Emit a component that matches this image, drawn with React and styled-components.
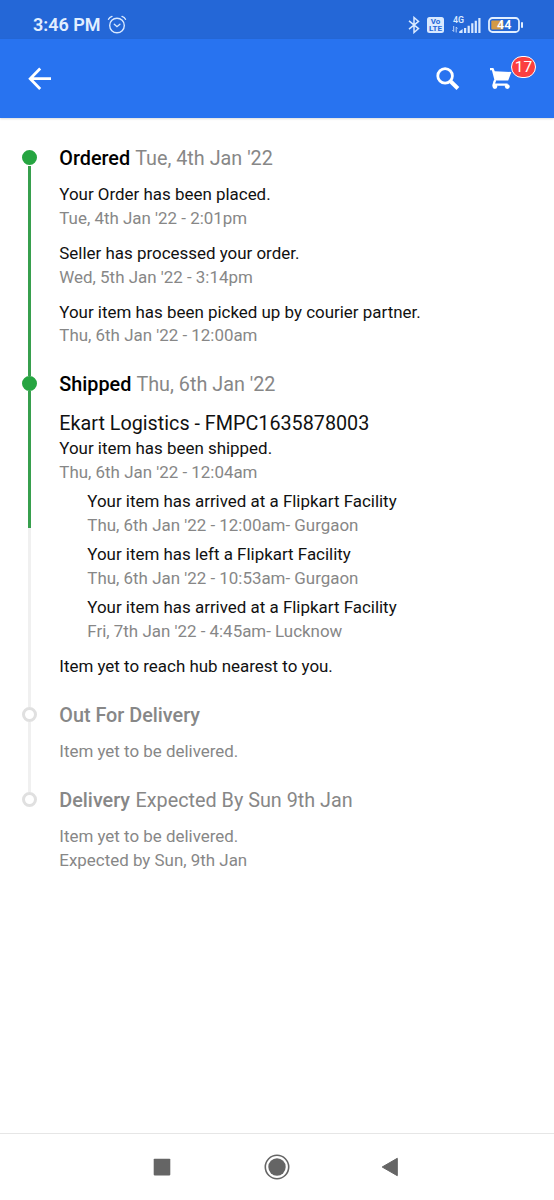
import React from "react";
import styled, { createGlobalStyle } from "styled-components";

const steps = [
  {
    title: "Ordered",
    date: "Tue, 4th Jan '22",
    done: true,
    progress: 100,
    events: [
      { text: "Your Order has been placed.", time: "Tue, 4th Jan '22 - 2:01pm" },
      { text: "Seller has processed your order.", time: "Wed, 5th Jan '22 - 3:14pm" },
      { text: "Your item has been picked up by courier partner.", time: "Thu, 6th Jan '22 - 12:00am" },
    ],
  },
  {
    title: "Shipped",
    date: "Thu, 6th Jan '22",
    done: true,
    progress: 43.2,
    courier: "Ekart Logistics - FMPC1635878003",
    events: [
      {
        text: "Your item has been shipped.",
        time: "Thu, 6th Jan '22 - 12:04am",
        stops: [
          { text: "Your item has arrived at a Flipkart Facility", time: "Thu, 6th Jan '22 - 12:00am- Gurgaon" },
          { text: "Your item has left a Flipkart Facility", time: "Thu, 6th Jan '22 - 10:53am- Gurgaon" },
          { text: "Your item has arrived at a Flipkart Facility", time: "Fri, 7th Jan '22 - 4:45am- Lucknow" },
        ],
      },
      { text: "Item yet to reach hub nearest to you." },
    ],
  },
  {
    title: "Out For Delivery",
    progress: 0,
    events: [{ time: "Item yet to be delivered." }],
  },
  {
    title: "Delivery",
    date: "Expected By Sun 9th Jan",
    last: true,
    events: [{ time: "Item yet to be delivered.", extra: "Expected by Sun, 9th Jan" }],
  },
];

const StatusIcons = () => (
  <Icons>
    <svg width="12" height="18" viewBox="0 0 12 18" fill="none" stroke="#d9e9ff" strokeWidth="1.5">
      <path d="M1 4.8 10.5 12.6 6 16.5V1.5L10.5 5.4 1 13.2" />
    </svg>
    <Volte>
      <span>Vo</span>
      <span>LTE</span>
    </Volte>
    <svg width="29" height="18" viewBox="0 0 29 18" fill="#d9e9ff">
      <NetworkText x="1" y="7">4G</NetworkText>
      <path d="M1.7 10v5.5L.4 14M4.2 16.5V11l1.3 1.5" fill="none" stroke="#b9d2fb" strokeWidth="1" />
      <path d="M7.2 17v-1.6l3.4-2.4v4zM12 12h2.2v5H12zM15.6 9.7h2.2V17h-2.2zM19.2 7.2h2.2V17h-2.2zM22.7 4.7h2.2V17h-2.2zM26.3 2h2.2v15h-2.2z" />
    </svg>
    <svg width="36" height="16" viewBox="0 0 36 16">
      <rect x="1" y="1" width="30" height="14" rx="3.5" fill="none" stroke="#e2efff" strokeWidth="1.8" />
      <rect x="3.3" y="3.4" width="12" height="9.2" rx="1" fill="#d39a45" />
      <path d="M34 6v4" stroke="#e2efff" strokeWidth="2" strokeLinecap="round" />
      <BatteryText x="16.2" y="12.3" textAnchor="middle">44</BatteryText>
    </svg>
  </Icons>
);

const AlarmIcon = () => (
  <svg width="20" height="20" viewBox="0 0 20 20" fill="none" stroke="#d9e9ff" strokeWidth="1.4" strokeLinecap="round">
    <circle cx="10" cy="10.5" r="7.3" />
    <path d="M7.3 9.3 10 11.7l2.9-2.4M1.5 4.3Q2.5 2.2 5 1.4M18.5 4.3Q17.5 2.2 15 1.4" />
  </svg>
);

const App = () => {
  return (
    <Page>
      <GlobalStyle />
      <StatusBar>
        <Clock>3:46 PM</Clock>
        <AlarmIcon />
        <StatusIcons />
      </StatusBar>
      <Header>
        <svg width="24" height="24" viewBox="0 0 24 24" fill="none" stroke="#fff" strokeWidth="2.8">
          <path d="M23 11.7H3M12.2 1.5 2.2 11.7l10 10.2" />
        </svg>
        <HeaderActions>
          <svg width="24" height="24" viewBox="0 0 24 24" fill="none" stroke="#fff">
            <circle cx="9.1" cy="8.9" r="7.3" strokeWidth="2.8" />
            <path d="m14.5 14.3 7.4 7.2" strokeWidth="4" />
          </svg>
          <Cart>
            <svg width="22" height="22" viewBox="0 0 22 22" fill="#fff">
              <path d="M0 0h3.4l1.4 3.2L21.4 4l-3.2 8.4H6L5 14.6H3.4l.9-3L1.9 2.2H0z" />
              <path d="M4.9 12.5 3.6 16.6h14" fill="none" stroke="#fff" strokeWidth="2.2" />
              <circle cx="4.9" cy="18.6" r="2.4" />
              <circle cx="17.3" cy="18.6" r="2.4" />
            </svg>
            <Badge>17</Badge>
          </Cart>
        </HeaderActions>
      </Header>
      <Timeline>
        {steps.map((step) => (
          <Step key={step.title}>
            <Rail>
              <Dot $done={step.done} />
              {!step.last && <Line $progress={step.progress} $first={step.title === "Ordered"} />}
            </Rail>
            <Content>
              <Title $done={step.done}>
                <b>{step.title}</b> {step.date}
              </Title>
              {step.courier && <Courier>{step.courier}</Courier>}
              <Events>
                {step.events.map((event, i) => (
                  <div key={i}>
                    {event.text && <Text>{event.text}</Text>}
                    {event.time && <Time>{event.time}</Time>}
                    {event.extra && <Time>{event.extra}</Time>}
                    {event.stops && (
                      <Stops>
                        {event.stops.map((stop) => (
                          <div key={stop.time}>
                            <Text>{stop.text}</Text>
                            <Time>{stop.time}</Time>
                          </div>
                        ))}
                      </Stops>
                    )}
                  </div>
                ))}
              </Events>
            </Content>
          </Step>
        ))}
      </Timeline>
      <NavBar>
        <svg width="18" height="18" viewBox="0 0 18 18">
          <rect x="0.7" y="0.8" width="16.6" height="16.6" rx="0.8" fill="#656565" />
        </svg>
        <svg width="26" height="26" viewBox="0 0 26 26">
          <circle cx="13" cy="13" r="11.7" fill="none" stroke="#656565" strokeWidth="1.6" />
          <circle cx="13" cy="13" r="8.7" fill="#656565" />
        </svg>
        <svg width="18" height="20" viewBox="0 0 18 20">
          <path d="M1.2 10 16.3 1.3v17.4z" fill="#656565" stroke="#656565" strokeLinejoin="round" />
        </svg>
      </NavBar>
    </Page>
  );
};

const GlobalStyle = createGlobalStyle`
  * {
    box-sizing: border-box;
  }
  body {
    margin: 0;
    background: #fff;
    font-family: Roboto, "Liberation Sans", sans-serif;
  }
  svg {
    display: block;
    flex: none;
  }
`;

const Page = styled.div`
  display: flex;
  flex-direction: column;
  width: 554px;
  height: 1200px;
  background: #fff;
`;

const StatusBar = styled.div`
  display: flex;
  align-items: center;
  height: 39px;
  flex: none;
  padding: 10px 30px 0 33px;
  background: #2467d7;
`;

const Clock = styled.span`
  width: 74px;
  font-size: 18px;
  font-weight: 600;
  white-space: nowrap;
  color: #e2efff;
`;

const Icons = styled.div`
  display: flex;
  align-items: center;
  gap: 7.5px;
  margin-left: auto;
`;

const Volte = styled.div`
  display: flex;
  flex-direction: column;
  align-items: center;
  justify-content: center;
  width: 17px;
  height: 16px;
  border-radius: 2.5px;
  background: #d9e9ff;
  color: #2467d7;
  font-size: 8px;
  font-weight: 700;
  line-height: 7px;

  span {
    height: 7px;
  }
`;

const NetworkText = styled.text`
  font-size: 8.8px;
  font-weight: 600;
`;

const BatteryText = styled.text`
  font-size: 12.5px;
  font-weight: 600;
  fill: #fff;
`;

const Header = styled.header`
  display: flex;
  align-items: center;
  justify-content: space-between;
  height: 79px;
  flex: none;
  padding: 0 42px 0 28px;
  background: #2873f0;
  box-shadow: 0 1px 2px rgba(0, 0, 0, 0.15);
`;

const HeaderActions = styled.div`
  display: flex;
  align-items: center;
  gap: 30px;
`;

const Cart = styled.div`
  position: relative;
`;

const Badge = styled.span`
  position: absolute;
  top: -12px;
  left: 21px;
  width: 25px;
  height: 22px;
  border: 1.5px solid #fff;
  border-radius: 11px;
  background: #fb3f3f;
  color: #fff;
  font-size: 15.5px;
  line-height: 20px;
  text-align: center;
`;

const Timeline = styled.main`
  flex: 1;
  padding: 26px 22px 0;
`;

const Step = styled.section`
  display: grid;
  grid-template-columns: 15px 1fr;
  column-gap: 22.3px;
`;

/* runs past the end of its step so that it meets the next dot */
const Rail = styled.div`
  display: flex;
  flex-direction: column;
  align-items: center;
  margin: 6px 0 -6px;
`;

const Dot = styled.span`
  width: 15px;
  height: 15px;
  flex: none;
  border: 3px solid ${(props) => (props.$done ? "#26a541" : "#e0e0e0")};
  border-radius: 50%;
  background: ${(props) => (props.$done ? "#26a541" : "#fff")};
`;

const Line = styled.span`
  width: 3px;
  flex: 1;
  margin-top: ${(props) => (props.$first ? "1px" : "0")};
  background: linear-gradient(
    #379f4d ${(props) => props.$progress}%,
    #f0f0f0 ${(props) => props.$progress}%
  );
`;

const Content = styled.div`
  padding-bottom: 22.3px;
`;

const Title = styled.h2`
  margin: 0 0 10.2px;
  padding-top: 1px;
  font-size: 19.8px;
  font-weight: 400;
  line-height: 28px;
  color: #878787;

  b {
    margin-right: 0.6px;
    font-weight: 500;
    color: ${(props) => (props.$done ? "#000" : "#878787")};
  }
`;

const Courier = styled.p`
  margin: 0;
  padding-top: 2px;
  font-size: 19.75px;
  line-height: 25.6px;
  color: #111;
`;

const Events = styled.div`
  display: flex;
  flex-direction: column;
  gap: 11.6px;
`;

const Text = styled.p`
  margin: 0;
  font-size: 16.93px;
  line-height: 23.6px;
  color: #111;
`;

const Time = styled(Text)`
  color: #878787;
`;

const Stops = styled.div`
  display: flex;
  flex-direction: column;
  gap: 5.8px;
  margin: 5.8px 0 0 28px;
`;

const NavBar = styled.nav`
  display: flex;
  align-items: center;
  justify-content: space-between;
  height: 67px;
  flex: none;
  padding: 0 155px 0 153px;
  border-top: 1px solid #e6e6e6;

  svg:nth-child(2) {
    margin-left: 2px;
  }
`;

export default App;
